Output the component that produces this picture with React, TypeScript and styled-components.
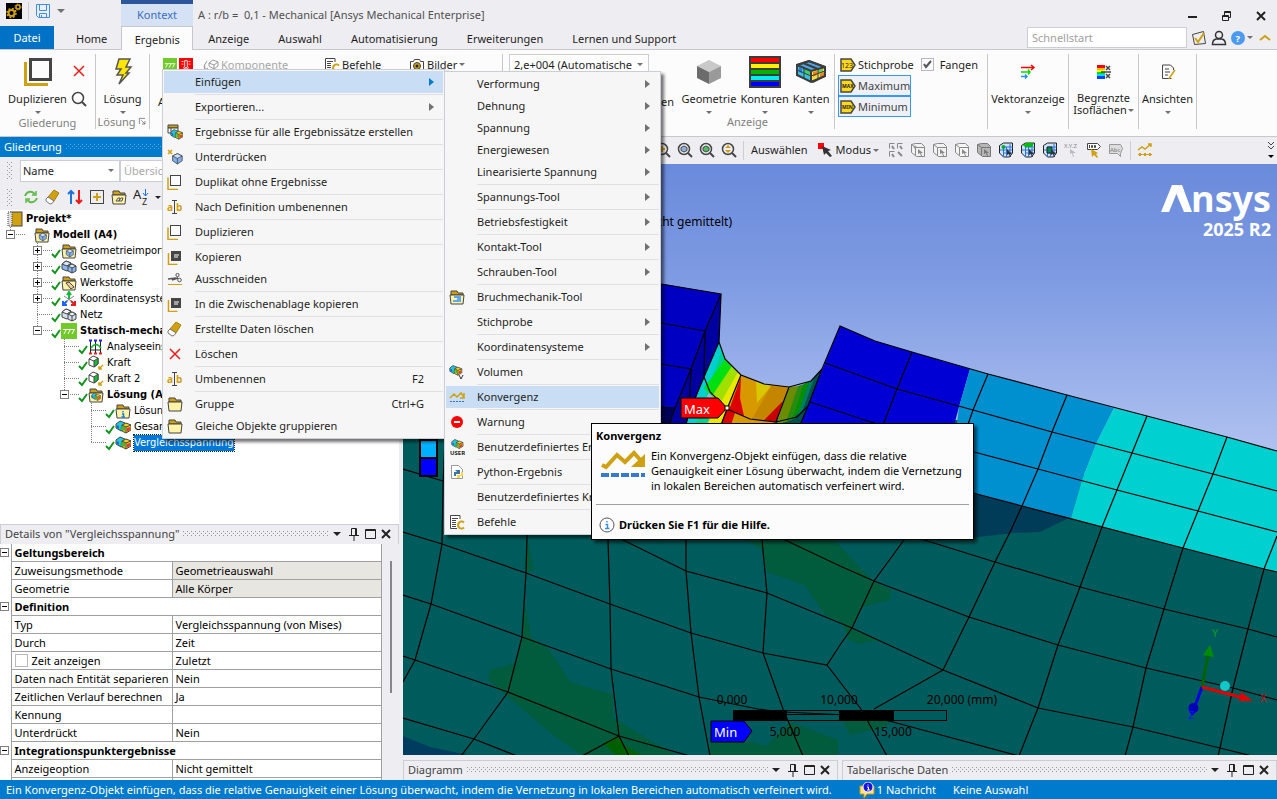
import React from "react";
import styled, { createGlobalStyle, css } from "styled-components";

const GlobalStyle = createGlobalStyle`
  * { box-sizing: border-box; }
  html, body { margin: 0; padding: 0; height: 100%; }
  body { font-family: "Noto Sans", "Open Sans", sans-serif; font-size: 11px; line-height: 16px; color: #1e1e1e; background: #eeeef2; overflow: hidden; }
  button, input, select { font: inherit; color: inherit; }
  button { border: 0; background: none; padding: 0; cursor: default; white-space: nowrap; }
  svg { display: block; flex: none; }
`;

/* ---------- icons ---------- */

const D = "#454545";
const G = "#cfa012";

const cubes = (
  <g strokeWidth="1">
    <path d="M1 5 5 2l5 2v6l-4 2-5-3z" fill="#25c7d8" stroke={D} />
    <path d="M7 6l4-2 5 2v5l-5 3-4-2z" fill="#f0d31a" stroke={D} />
    <path d="M8 7l2 1v4l-2-1z" fill="#2fbf3a" />
    <path d="M12 9l3-1v3l-3 1.500z" fill="#e33" />
    <path d="M2 6l2 1v3l-2-1z" fill="#1e63e0" />
    <path d="M5 8l2 0v3l-2 0z" fill="#18c060" />
    <path d="M7 6l4 2 5-2M11 8v6" fill="none" stroke={D} />
  </g>
);
const folder = (
  <g>
    <path d="M2 4V2h6l1 2h5v2H2z" fill={G} stroke={D} />
    <path d="M1 6h14l-1 9H2z" fill="#fff3a8" stroke={D} />
  </g>
);
const blueCube = (
  <g stroke={D} strokeLinejoin="round">
    <path d="M8 2l6 3v6l-6 4-6-4V5z" fill="#7fb0f0" />
    <path d="M2 5l6-3 6 3-6 3z" fill="#cfe0f8" />
    <path d="M8 8v7" fill="none" />
  </g>
);
const twinCubes = (fill: string, light: string) => (
  <g stroke={D} strokeLinejoin="round">
    <path d="M1 5l4-3 5 2v6l-4 2-5-2z" fill={fill} />
    <path d="M1 5l5 2 4-3-5-2z" fill={light} />
    <path d="M7 7l4-2 4 2v5l-4 2-4-2z" fill={fill} />
    <path d="M7 7l4 2 4-2-4-2z" fill={light} />
    <path d="M11 9v5" />
  </g>
);
const magnifier = (
  <g fill="none" stroke={D}>
    <circle cx="7" cy="7" r="5.5" strokeWidth="1.5" />
    <path d="M11 11l4 4" strokeWidth="2" />
  </g>
);
const selCube = (fill: string, dark: string) => (
  <g stroke={dark} fill={fill}>
    <path d="M1.5 2.5 5.500 1.500h6l3 3v10h-8l-5-4z" />
    <path d="M5.5 5.5h9M5.500 5.500v8M1.500 2.500l4 3" fill="none" />
    <path d="M8 7l5 4h-2l1 3h-1l-1-3-2 1z" fill={dark} stroke="none" />
  </g>
);
const meshCube = (green: React.ReactNode) => (
  <g>
    <path d="M1.5 3.5 5.5 1h9v10l-3 4h-6l-4-4z" fill="#cfe3ff" stroke="#222" />
    <path d="M5.5 5v10M8.5 5v10M2 8h12M5 11h9M5.5 5h9M12 2v12" stroke="#2b72d8" fill="none" />
    {green}
    <path d="M9 7l5 5h-2l1 3h-1l-1-3-2 1z" fill="#333" />
  </g>
);
const tag = <path d="M1 2h10l4 6-4 6H1z" fill="#ffd81a" stroke={D} strokeWidth="1.5" />;

const icons: Record<string, React.ReactNode> = {
  none: null,
  app: (
    <g>
      <rect width="16" height="16" fill="#000" />
      <circle cx="5.5" cy="10" r="3" fill="none" stroke={G} strokeWidth="2" />
      <circle cx="5.5" cy="10" r="4.5" fill="none" stroke={G} strokeWidth="1.5" strokeDasharray="2 1.5" />
      <circle cx="12" cy="4" r="2" fill="none" stroke={G} strokeWidth="1.5" />
      <circle cx="12" cy="4" r="3" fill="none" stroke={G} strokeDasharray="1.5 1" />
    </g>
  ),
  save: (
    <g fill="none" stroke="#3b8fe8">
      <path d="M1.5 1.5h13v13H3.5l-2-2z" />
      <path d="M4.5 1.5v6h7v-6M4.5 14.5v-4h7v4M6.5 12v2" />
    </g>
  ),
  duplicate: (
    <g fill="none">
      <path d="M1 3.5v12h10" stroke={G} strokeWidth="1.5" />
      <rect x="3.5" y="1.5" width="10" height="10" stroke={D} fill="#fbfbfb" />
    </g>
  ),
  copy: (
    <g>
      <path d="M1.5 4v11.5h9" stroke={G} strokeWidth="1.5" fill="none" />
      <rect x="4" y="2" width="10" height="10" fill={D} />
      <path d="M7 6h5M7 8h4" stroke="#fff" />
    </g>
  ),
  cut: (
    <g fill="none" stroke="#555">
      <path d="M1 8l8-1M5 9l6-2" strokeWidth="1.5" />
      <circle cx="12.5" cy="9" r="1.8" />
      <circle cx="10.5" cy="4" r="1.6" />
      <path d="M11 5.5 9 8" />
      <path d="M1 13.5h14" stroke={G} />
    </g>
  ),
  redX: <path d="M3 3l10 10M13 3 3 13" stroke="#f01818" strokeWidth="1.5" fill="none" />,
  search: magnifier,
  rename: (
    <g>
      <text x="0" y="12" fontSize="10" fontWeight="700" fill={G}>a</text>
      <text x="9" y="12" fontSize="10" fontWeight="700" fill={G}>b</text>
      <path d="M5 1.5h5M5 14.5h5M7.5 1.5v13" stroke={D} fill="none" />
    </g>
  ),
  eraser: (
    <g>
      <path d="M3 8 9 1l5 3-5 8z" fill={G} stroke="#a8820a" />
      <path d="M3 8l6 4-2 2.5-2 .5-4-3v-2z" fill="#fff" stroke="#777" />
    </g>
  ),
  folder,
  folderCube: <g>{folder}<g transform="translate(4 5) scale(.6)">{blueCube}</g></g>,
  folderPen: <g>{folder}<path d="M5 8l3-1 5 5-3 2z" fill="#f0d0a0" stroke={D} /></g>,
  folderInfo: <g>{folder}<path d="M8 8v1.5M7 11h1.5v3M6.5 14h3.5" stroke="#1e7fd8" strokeWidth="1.5" fill="none" /></g>,
  folderResult: <g>{folder}<g transform="translate(3 5) scale(.6)">{cubes}</g></g>,
  folderLink: <g>{folder}<path d="M5 12l2-3h2l-1 3H5zM8 12l2-3h2l-1 3z" fill="none" stroke="#555" /></g>,
  folderBlue: <g>{folder}<path d="M5 7h7v6H4v-2h4v-2H5z" fill="#62a8ee" /></g>,
  results: cubes,
  resultsAll: (
    <g>
      <path d="M1 1h10v3H1z" fill={G} stroke={D} />
      <path d="M1 4h10v5H1zM4 4v5" fill="#fff" stroke={D} />
      <g transform="translate(3 4) scale(.8)">{cubes}</g>
    </g>
  ),
  resultsUser: (
    <g>
      <g transform="translate(2 -1) scale(.75)">{cubes}</g>
      <text x="1" y="16" fontSize="6" fontWeight="700" fill="#222">USER</text>
    </g>
  ),
  resultsV: (
    <g>
      <g transform="scale(.8)">{cubes}</g>
      <path d="M10 11l2 4 2-4" fill="none" stroke="#333" />
    </g>
  ),
  suppress: (
    <g>
      <path d="M1 1l4 4M5 1 1 5" stroke={G} strokeWidth="1.5" />
      <g transform="translate(4 3) scale(.8)">{blueCube}</g>
    </g>
  ),
  geometry: twinCubes("#8ab8f2", "#d7e6fb"),
  mesh: twinCubes("#d3e0ef", "#f2f7fc"),
  axes: (
    <g fill="none" strokeWidth="1.5">
      <path d="M8 8V2M6 4l2-3 2 3" stroke="#12b83a" strokeWidth="2" />
      <path d="M3 5l10 7M13 5 3 12" stroke="#888" strokeWidth="1" />
      <path d="M6 10l-4 4M2 10v4h4" stroke="#1f62ff" strokeWidth="2" />
      <path d="M10 10l4 4M14 10v4h-4" stroke="#e02020" strokeWidth="2" />
    </g>
  ),
  staticEnv: (
    <g>
      <rect width="16" height="16" fill="#72c92a" />
      <path d="M2 6.5h12M5 7l-2 4M9 7l-2 4M13 7l-2 4" stroke="#fff" fill="none" />
    </g>
  ),
  thermal: (
    <g>
      <rect width="16" height="16" fill="#f00" />
      <path d="M6.5 3h3v6l1 2-1 2h-3l-1-2 1-2zM3 4h2M3 7h2M11 4h2M11 7h2M3 13h10" stroke="#fff" fill="none" />
      <circle cx="8" cy="11" r="1" fill="#fff" />
    </g>
  ),
  analysis: (
    <g fill="none">
      <path d="M2.5 2v13M7.5 2v13M12.5 2v13M2 11h11" stroke="#222" />
      <path d="M3 9q5-7 10 0" stroke="#12b32a" strokeWidth="1.5" />
      <path d="M1 1.5h3M6 1.5h3M11 1.5h3" stroke="#22f" strokeWidth="2" />
      <path d="M1 14.5h3M6 14.5h3M11 14.5h3" stroke="#e22" strokeWidth="2" />
    </g>
  ),
  force: (
    <g>
      <path d="M1 4l4-3 5 2v6l-4 3-5-2z" fill="#fff" stroke={D} />
      <path d="M6 6l4-3v6l-4 3z" fill="#12c435" stroke={D} />
      <path d="M1 4l5 2" stroke={D} />
      <path d="M15 10l-4 4M11 11v3h3" stroke={G} strokeWidth="1.5" fill="none" />
    </g>
  ),
  project: (
    <g>
      <rect x="4" y="1" width="11" height="14" fill={G} stroke={D} />
      <rect x="1" y="1" width="4" height="14" fill="#ddd" stroke={D} strokeDasharray="1 1" />
    </g>
  ),
  refresh: (
    <g fill="none" stroke="#5dbb46" strokeWidth="2">
      <path d="M2 7q2-5 7-4l3 2M14 9q-2 5-7 4l-3-2" />
      <path d="M13 2v4H9M3 14v-4h4" strokeWidth="1.5" />
    </g>
  ),
  arrows: (
    <g fill="none" strokeWidth="2">
      <path d="M4 15V2M1 5l3-3 3 3" stroke="#1f72d8" />
      <path d="M12 1v13M9 11l3 3 3-3" stroke="#f01818" />
    </g>
  ),
  plusBox: (
    <g fill="none">
      <rect x="1.5" y="1.5" width="13" height="13" stroke={D} />
      <path d="M8 4v8M4 8h8" stroke={G} strokeWidth="2" />
    </g>
  ),
  sortAz: (
    <g>
      <text x="0" y="10" fontSize="13" fill="#222">A</text>
      <text x="9" y="16" fontSize="9" fill="#222">Z</text>
      <path d="M12.5 0v7M10 4l2.500 3 2.500-3" stroke="#1f72d8" fill="none" />
    </g>
  ),
  commands: (
    <g>
      <path d="M11 5V1.5H1.5v13H8" fill="#fff" stroke={D} />
      <path d="M3 4.5h6M3 6.5h4M3 8.5h4M3 10.5h4M3 12.5h4" stroke={D} />
      <path d="M15 8.5a3.5 3.5 0 1 0 0 5" fill="none" stroke={G} strokeWidth="2" />
    </g>
  ),
  camera: (
    <g>
      <path d="M1.5 4.5h3l1-2h5l1 2h3v9h-13z" fill="#fff" stroke={D} />
      <circle cx="8" cy="9" r="3.5" fill={G} stroke={D} />
      <circle cx="8" cy="9" r="1.5" fill="#222" />
    </g>
  ),
  component: (
    <g fill="none" stroke="#999">
      <path d="M6 6l4-3 5 2v4l-4 3-5-3zM6 6l5 2 4-3M11 8v4" />
      <path d="M4 4q-4 4-2 8M1 9l1 4 3-2" />
      <path d="M4 14h11" strokeWidth="2" />
    </g>
  ),
  convergence: (
    <g fill="none">
      <path d="M1 9l4-4 3 3 4-4 3 4M15 4v5h-4" stroke={G} strokeWidth="1.5" />
      <path d="M1 12.5h14" stroke="#2f72cf" strokeDasharray="2 1" />
    </g>
  ),
  warning: (
    <g>
      <circle cx="8" cy="8" r="6" fill="#f00" />
      <path d="M5 8h6" stroke="#fff" strokeWidth="2" />
    </g>
  ),
  python: (
    <g>
      <path d="M2.5 1.5h7l4 4v9h-11z" fill="#fff" stroke="#999" />
      <path d="M6 6h5v4H7v2H5V8h3z" fill="#3b77a8" />
      <path d="M12 8h2v4h-3v2H8v-3h4z" fill="#ffd343" />
    </g>
  ),
  max: <g>{tag}<text x="2" y="10" fontSize="5" fontWeight="700" fill="#222">MAX</text></g>,
  min: <g>{tag}<text x="2" y="10" fontSize="5" fontWeight="700" fill="#222">MIN</text></g>,
  probe: <g>{tag}<text x="1" y="11" fontSize="7" fill="#222">123</text></g>,
  vectors: (
    <g fill="none" strokeWidth="1.5">
      <path d="M1 3.5h13M11 1l3 2.5-3 2.5" stroke="#f00" />
      <path d="M1 8h9M8 5.5 10 8l-2 2.5" stroke="#0d0" />
      <path d="M1 12.5h6M5 10.5l2 2-2 2" stroke="#2f8ff0" />
    </g>
  ),
  iso: (
    <g>
      <path d="M1 1h8v3H1z" fill="#f00" />
      <path d="M1 4h8v2H1z" fill="#fb0" />
      <path d="M1 6h8v2H1z" fill="#ef0" />
      <path d="M1 8h8v2H1z" fill="#0d2" />
      <path d="M1 10h8v2H1z" fill="#0df" />
      <path d="M1 12h8v3H1z" fill="#04f" />
      <path d="M5 8h10M10 2l4 4M14 2l-4 4M10 10l4 4M14 10l-4 4" stroke={D} strokeWidth="1.5" />
    </g>
  ),
  views: (
    <g fill="none">
      <path d="M13.5 6V4l-3-3h-8v13.5h9" stroke={D} />
      <path d="M5 5h4M5 8h5M5 11h3" stroke={D} />
      <path d="M15 6l-5 7-1 2" stroke={G} strokeWidth="1.5" />
    </g>
  ),
  zoomPlus: <g>{magnifier}<path d="M7 4v6M4 7h6" stroke={G} strokeWidth="2" /></g>,
  zoomCube: <g>{magnifier}<path d="M7 4l3 1.5v3L7 10 4 8.5v-3z" fill="#8fb2dc" stroke={D} /></g>,
  zoomGreen: <g>{magnifier}<path d="M7 4l3 1.5v3L7 10 4 8.5v-3z" fill="#4cc060" stroke={D} /></g>,
  zoomFit: <g>{magnifier}<path d="M7 3l3 3H4zM7 11l3-3H4z" fill={G} /></g>,
  selMode: (
    <g>
      <rect x="0" y="1" width="6" height="6" fill="#f00" />
      <path d="M4 4l9 4-3 1 4 5-2 1-4-4-2 2z" fill="#333" />
    </g>
  ),
  grid4: (
    <g fill="none" stroke="#888">
      <path d="M1.5 6.5v-5h5M9.5 6.5v-5h5M1.5 14.5v-5h5" />
      <path d="M4 4l2 3M12 4l2 3M4 12l2 3M10 10l4 4" strokeWidth="2" />
    </g>
  ),
  cubeVertex: <g>{selCube("#f2f2f2", "#888")}<circle cx="5" cy="5" r="1.5" fill="#999" /></g>,
  cubeEdge: selCube("#f2f2f2", "#888"),
  cubeFace: selCube("#f5f5f5", "#888"),
  cubeBody: selCube("#b5b5b5", "#777"),
  meshNode: meshCube(<circle cx="5.5" cy="5" r="2" fill="#0a2" />),
  meshFace: meshCube(<path d="M3 3l3-2h8l-2 4H5z" fill="#0b0" />),
  meshBody: meshCube(<path d="M5 5h5v6H5z" fill="#085" stroke="#222" />),
  xyz: (
    <g>
      <text x="0" y="6" fontSize="6" fill="#888">X.Y.Z</text>
      <path d="M6 7l6 4H9l1 4H9l-1-4-2 1z" fill="#bbb" />
    </g>
  ),
  tagPick: (
    <g>
      <path d="M1.5 1.5h10l3 3-3 3h-10z" fill="#fff" stroke={D} />
      <path d="M3.5 3v3M5.500 3.500h1v2h-1zM8.500 3.500h1v2h-1z" stroke={D} fill="none" />
      <path d="M5 7l7 4-2 1 2 3-1 1-3-3-2 2z" fill={G} />
    </g>
  ),
  label: (
    <g>
      <path d="M1.5 2.5h11l2 4-2 5v3l-3-3h-8z" fill="#ddd" stroke="#999" />
      <text x="2" y="10" fontSize="6" fill="#777">Abc</text>
    </g>
  ),
  chart: (
    <g fill="none" stroke={G}>
      <path d="M1 8l4-3 3 2 6-5M11 2h3v3" strokeWidth="1.5" />
      <path d="M1 12.5h14" />
      <path d="M2 12.5h2M7 12.5h2M12 12.5h2" strokeWidth="3" />
    </g>
  ),
  clipboard: (
    <g fill="none">
      <path d="M1.5 4.5l11-3 2 12-11 1z" stroke={D} />
      <path d="M4 8l3 4 6-9" stroke={G} strokeWidth="2" />
    </g>
  ),
  user: (
    <g fill="none" stroke="#333" strokeWidth="1.5">
      <circle cx="8" cy="5" r="3.5" />
      <path d="M1.5 14.5q0-5 4-5.5h5q4 .5 4 5.5z" />
    </g>
  ),
  help: (
    <g>
      <circle cx="8" cy="8" r="8" fill="#4a9bf0" />
      <text x="5" y="12" fontSize="11" fontWeight="700" fill="#fff">?</text>
    </g>
  ),
  message: (
    <g>
      <path d="M1 4h14v8H8l-3 4v-4H1z" fill="#ffe38a" stroke="#c90" />
      <circle cx="9" cy="5" r="5" fill="#1414e0" stroke="#eef" />
      <path d="M8 5h1.5v3M8 8h3M9 2.5v1" stroke="#fff" fill="none" />
    </g>
  ),
  info: (
    <g>
      <circle cx="8" cy="8" r="7" fill="#fff" stroke="#555" />
      <path d="M8 4v1.5M6.5 7.5h2v4M6 11.5h4.5" stroke="#3b8fe8" strokeWidth="1.5" fill="none" />
    </g>
  ),
  launcher: <path d="M4.5 12V4.5H12M7 7l5 5M12 8v4H8" fill="none" stroke="#666" />,
  pin: <path d="M5.5 9V2.5h5V9M9.5 2.5V9M3 9.5h10M8 10v5" fill="none" stroke="#222" />,
  box: <path d="M3.5 3.5h10v9h-10zM3 4.5h11" fill="none" stroke="#222" />,
  close: <path d="M4 4l8 8M12 4l-8 8" fill="none" stroke="#222" strokeWidth="2" />,
  minimize: <path d="M3 9h9" stroke="#222" strokeWidth="2" />,
  restore: (
    <path d="M3.5 7.5h6v5h-6zM3.5 8.5h6M5.5 7V3.5h6v6H10M5.5 4.5h6" fill="none" stroke="#222" />
  ),
  chevronUp: <path d="M3 10l5-4 5 4" fill="none" stroke={G} strokeWidth="2" />,
};

const Icon = ({ name, size = 16 }: { name: string; size?: number }) => (
  <svg width={size} height={size} viewBox="0 0 16 16" aria-hidden="true">
    {icons[name]}
  </svg>
);

const Caret = styled.span<{ $color?: string; $big?: boolean }>`
  display: inline-block;
  flex: none;
  width: 0;
  height: 0;
  border: ${(p) => (p.$big ? 4 : 3)}px solid transparent;
  border-top-color: ${(p) => p.$color || "#707070"};
  border-bottom: 0;
`;

/* ---------- shell ---------- */

const Shell = styled.div`
  position: relative;
  display: flex;
  flex-direction: column;
  width: 100%;
  height: 100vh;
  overflow: hidden;
`;

const TitleBar = styled.header`
  display: flex;
  height: 26px;
  flex: none;
`;

const QuickAccess = styled.div`
  display: flex;
  align-items: center;
  width: 121px;
  padding: 0 0 4px 6px;
  gap: 6px;
`;

const QuickDivider = styled.span`
  width: 1px;
  height: 18px;
  background: #ccced6;
`;

const ContextTab = styled.div`
  width: 72px;
  border-top: 4px solid #2b579a;
  background: #d5e1f4;
  color: #3b6dbd;
  text-align: center;
  line-height: 22px;
`;

const WindowTitle = styled.h1`
  flex: 1;
  margin: 0;
  padding-left: 5px;
  font-size: 11px;
  font-weight: 400;
  line-height: 30px;
  color: #505050;
`;

const WindowButtons = styled.div`
  display: flex;
  gap: 18px;
  padding: 5px 8px 0 0;
`;

const TabRow = styled.nav`
  display: flex;
  flex: none;
  height: 24px;
  border-bottom: 1px solid #c8c8cc;
`;

const FileTab = styled.button`
  width: 54px;
  height: 23px;
  background: #0072c6;
  color: #fff;
`;

const Tab = styled.button<{ $active?: boolean }>`
  padding: 2px 14px 0 15px;
  height: 24px;
  ${(p) =>
    p.$active &&
    css`
      width: 72px;
      padding: 2px 0 0;
      border: 1px solid #c8c8cc;
      border-bottom: 0;
      background: #fcfcfc;
    `}
`;

const Tabs = styled.div`
  display: flex;
  flex: 1;
  padding-left: 7px;
`;

const TabTools = styled.div`
  display: flex;
  align-items: center;
  gap: 4px;
  padding-right: 4px;
`;

const QuickSearch = styled.input`
  width: 160px;
  height: 21px;
  padding: 0 4px;
  border: 1px solid #ccced6;
  background: #fff;
  &::placeholder { color: #a0a0a0; opacity: 1; }
`;

/* ---------- ribbon ---------- */

const Ribbon = styled.section`
  display: flex;
  flex: none;
  height: 87px;
  padding-top: 4px;
  background: #fcfcfc;
  border-bottom: 1px solid #c8c8cc;
`;

const Group = styled.div<{ $w: number; $line?: boolean }>`
  display: flex;
  flex-direction: column;
  flex: none;
  width: ${(p) => p.$w}px;
  height: 75px;
  border-right: 1px solid ${(p) => (p.$line ? "#c8c8cc" : "transparent")};
`;

const GroupBody = styled.div`
  display: flex;
  justify-content: center;
  height: 62px;
  gap: 4px;
`;

const GroupName = styled.div<{ $trail?: number }>`
  display: flex;
  justify-content: center;
  padding-right: ${(p) => p.$trail || 0}px;
  line-height: 14px;
  color: #808080;
`;

const BigButton = styled.button`
  display: flex;
  flex-direction: column;
  align-items: center;
  flex: none;
`;

const BigIcon = styled.span`
  display: flex;
  align-items: center;
  justify-content: center;
  height: 36px;
`;

const BigLabel = styled.span`
  line-height: 18px;
  margin-bottom: 3px;
`;

const StackedLabel = styled.span`
  display: flex;
  flex-direction: column;
  align-items: center;
  padding-top: 2px;
  line-height: 12px;
`;

const StackedRow = styled.span`
  display: flex;
  align-items: center;
  gap: 1px;
`;

const SideTools = styled.div`
  display: flex;
  flex-direction: column;
  gap: 12px;
  padding: 9px 0;
`;

const SmallRow = styled.div<{ $indent?: number }>`
  display: flex;
  align-items: center;
  height: 21px;
  gap: 2px;
  padding-left: ${(p) => p.$indent || 0}px;
`;

const LowerRow = styled(SmallRow)<{ $end?: boolean }>`
  margin-top: 16px;
  padding-right: 2px;
  justify-content: ${(p) => (p.$end ? "flex-end" : "flex-start")};
`;

const SmallButton = styled.button<{ $off?: boolean }>`
  display: flex;
  align-items: center;
  gap: 2px;
  color: ${(p) => (p.$off ? "#a8a8a8" : "inherit")};
`;

const Toggle = styled.button`
  display: flex;
  align-items: center;
  gap: 2px;
  width: 73px;
  height: 21px;
  padding-left: 1px;
  border: 1px solid #3399ff;
  background: #eef0f6;
  color: #444;
`;

const ProbeTools = styled.div`
  display: flex;
  flex-direction: column;
  padding-left: 3px;
`;

const CheckLabel = styled.label<{ $cell?: boolean }>`
  display: flex;
  align-items: center;
  gap: ${(p) => (p.$cell ? 4 : 6)}px;
  margin-left: ${(p) => (p.$cell ? 0 : 5)}px;
`;

const TickBox = styled.input`
  appearance: none;
  width: 13px;
  height: 13px;
  margin: 0;
  border: 1px solid #b8b8c0;
  background: #fff;
  &:checked {
    background: url("data:image/svg+xml,%3Csvg xmlns='http://www.w3.org/2000/svg' viewBox='0 0 11 11'%3E%3Cpath d='M2 5l2 3 5-6' fill='none' stroke='%23555' stroke-width='2'/%3E%3C/svg%3E") center / 11px no-repeat;
  }
`;

const ScaleSelect = styled.select`
  appearance: none;
  width: 140px;
  height: 21px;
  margin-left: 6px;
  padding: 0 4px;
  border: 1px solid #ccced6;
  border-radius: 0;
  background: #fff;
`;

const SelectWrap = styled.span`
  display: flex;
  align-items: center;
  & > ${Caret} { margin-left: -12px; }
`;

/* ---------- docked panels ---------- */

const Workspace = styled.div`
  display: flex;
  flex: 1;
  min-height: 0;
`;

const LeftColumn = styled.aside`
  display: flex;
  flex-direction: column;
  width: 399px;
  flex: none;
  margin-right: 4px;
`;

const RightColumn = styled.main`
  display: flex;
  flex-direction: column;
  flex: 1;
  min-width: 0;
`;

const CaptionBar = styled.div<{ $active?: boolean }>`
  display: flex;
  align-items: center;
  flex: none;
  height: 20px;
  gap: 4px;
  padding: 0 4px 2px;
  border: 1px solid ${(p) => (p.$active ? "#007acc" : "#ccced6")};
  border-width: 1px 1px 0 ${(p) => (p.$active ? 0 : 1)}px;
  background: ${(p) => (p.$active ? "#007acc" : "#eeeef2")};
  color: ${(p) => (p.$active ? "#fff" : "#444")};
`;

const Grip = styled.span<{ $color?: string }>`
  flex: 1;
  height: 5px;
  background-image: radial-gradient(circle at 0 0, ${(p) => p.$color || "#999"} 1px, transparent 1px),
    radial-gradient(circle at 0 0, ${(p) => p.$color || "#999"} 1px, transparent 1px);
  background-size: 4px 4px;
  background-position: 0 0, 2px 2px;
`;

const SideGrip = styled(Grip)`
  flex: none;
  width: 5px;
  height: 17px;
  margin-right: 8px;
`;

const CaptionTools = styled.span`
  display: flex;
  align-items: center;
  & > button:first-child { margin-right: 5px; padding: 4px 0; display: flex; }
`;

const Caption = ({ title, active }: { title: string; active?: boolean }) => (
  <CaptionBar $active={active}>
    <span>{title}</span>
    <Grip $color={active ? "#59a8de" : undefined} />
    <CaptionTools>
      <button aria-label="Optionen"><Caret $color="#222" $big /></button>
      <button aria-label="Anheften"><Icon name="pin" /></button>
      <button aria-label="Maximieren"><Icon name="box" /></button>
      <button aria-label="Schließen"><Icon name="close" /></button>
    </CaptionTools>
  </CaptionBar>
);

const FilterBar = styled.div`
  display: flex;
  align-items: center;
  flex: none;
  height: 27px;
  padding-left: 7px;
`;

const FilterSelect = styled.select`
  appearance: none;
  width: 100px;
  height: 22px;
  padding: 0 2px;
  border: 1px solid #ccced6;
  border-radius: 0;
  background: #fff;
`;

const FilterInput = styled.input`
  flex: 1;
  height: 22px;
  margin-left: 6px;
  padding: 0 3px;
  border: 1px solid #ccced6;
  background: #fff;
  &::placeholder { color: #a8a8a8; opacity: 1; }
`;

const TreeTools = styled(FilterBar)`
  height: 26px;
  gap: 6px;
  & > ${SideGrip} { margin-right: 5px; }
`;

const Tree = styled.ul`
  flex: 1;
  margin: 0;
  padding: 1px 0 0;
  list-style: none;
  background: #fff;
  overflow: hidden;
  font-family: "DejaVu Sans Condensed", "DejaVu Sans", sans-serif;
`;

const TreeItem = styled.li<{ $level: number; $bold?: boolean }>`
  display: flex;
  align-items: center;
  height: 16px;
  padding-left: ${(p) => (p.$level ? p.$level * 27 - 17 : 7)}px;
  font-weight: ${(p) => (p.$bold ? 700 : 400)};
  color: #000;
  white-space: nowrap;
`;

const TreeLabel = styled.span<{ $selected?: boolean }>`
  line-height: 16px;
  margin-left: 3px;
  ${(p) =>
    p.$selected &&
    css`
      background: #0078d7;
      color: #fff;
      outline: 1px dotted #222;
    `}
`;

type Node = { level: number; icon: string; text: string; box?: "+" | "-"; check?: boolean; bold?: boolean; last?: boolean; sel?: boolean };

const nodes: Node[] = [
  { level: 0, icon: "project", text: "Projekt*", bold: true },
  { level: 1, icon: "folderCube", text: "Modell (A4)", bold: true, box: "-", last: true },
  { level: 2, icon: "folderCube", text: "Geometrieimporte", box: "+", check: true },
  { level: 2, icon: "geometry", text: "Geometrie", box: "+", check: true },
  { level: 2, icon: "folderPen", text: "Werkstoffe", box: "+", check: true },
  { level: 2, icon: "axes", text: "Koordinatensysteme", box: "+", check: true },
  { level: 2, icon: "mesh", text: "Netz", check: true },
  { level: 2, icon: "staticEnv", text: "Statisch-mechanisch (A5)", box: "-", check: true, bold: true, last: true },
  { level: 3, icon: "analysis", text: "Analyseeinstellungen", check: true },
  { level: 3, icon: "force", text: "Kraft", check: true },
  { level: 3, icon: "force", text: "Kraft 2", check: true },
  { level: 3, icon: "folderResult", text: "Lösung (A6)", box: "-", check: true, bold: true, last: true },
  { level: 4, icon: "folderInfo", text: "Lösungsinformationen", check: true },
  { level: 4, icon: "results", text: "Gesamtverformung", check: true },
  { level: 4, icon: "results", text: "Vergleichsspannung", check: true, last: true, sel: true },
];

const Elbow = ({ box, check, last }: Node) => (
  <svg width="24" height="16" overflow="visible" fill="none" stroke="#808080">
    <path d={`M.5 0V${last ? 8 : 16}M0 7.5h16`} strokeDasharray="1 1" />
    {box && (
      <g>
        <rect x="-3.5" y="3.5" width="8" height="8" fill="#fff" />
        <path d={box === "+" ? "M-2 7.5h5M.5 5v5" : "M-2 7.5h5"} stroke="#000" />
      </g>
    )}
    {check && <path d="M15 11l3 3 5-7" stroke="#10941c" strokeWidth="2" />}
  </svg>
);

/* ---------- details ---------- */

const Details = styled.div`
  display: flex;
  flex: none;
  height: 236px;
  overflow: hidden;
  background: #eeeef2;
`;

const DetailsTable = styled.table`
  width: 382px;
  margin-top: -1px;
  border-collapse: collapse;
  table-layout: fixed;
  background: #fff;
  color: #000;
  align-self: flex-start;
  & td, & th {
    height: 18px;
    padding: 0 3px;
    border: 1px solid #a0a0a0;
    line-height: 17px;
    text-align: left;
    font-weight: 400;
    white-space: nowrap;
  }
  & th[scope="colgroup"] { font-weight: 700; }
`;

const GutterCol = styled.col`
  width: 11px;
`;

const NameCol = styled.col`
  width: 161px;
`;

const GutterCell = styled.td`
  && { padding: 0; border-width: 0 1px 0 0; vertical-align: middle; }
`;

const CollapseButton = styled.button`
  display: block;
  width: 9px;
  height: 9px;
  border: 1px solid #808080;
  background: linear-gradient(#000, #000) center / 5px 1px no-repeat #fff;
`;

const ValueCell = styled.td<{ $readonly?: boolean }>`
  background: ${(p) => (p.$readonly ? "#e8e6e1" : "#fff")};
`;

const ScrollTrack = styled.div`
  flex: 1;
  padding: 17px 7px 0 8px;
`;

const ScrollThumb = styled.div`
  width: 2px;
  height: 132px;
  background: #868690;
`;

const details: [string, string?, boolean?][] = [
  ["Geltungsbereich"],
  ["Zuweisungsmethode", "Geometrieauswahl", true],
  ["Geometrie", "Alle Körper", true],
  ["Definition"],
  ["Typ", "Vergleichsspannung (von Mises)"],
  ["Durch", "Zeit"],
  ["Zeit anzeigen", "Zuletzt"],
  ["Daten nach Entität separieren", "Nein"],
  ["Zeitlichen Verlauf berechnen", "Ja"],
  ["Kennung", ""],
  ["Unterdrückt", "Nein"],
  ["Integrationspunktergebnisse"],
  ["Anzeigeoption", "Nicht gemittelt"],
  ["", ""],
];

/* ---------- graphics area ---------- */

const GraphicsBar = styled.div`
  display: flex;
  align-items: center;
  flex: none;
  height: 27px;
  gap: 6px;
  padding: 0 0 1px 10px;
`;

const BarDivider = styled.span`
  width: 1px;
  height: 19px;
  background: #ccced6;
`;

const BarText = styled.button`
  display: flex;
  align-items: center;
  gap: 2px;
  padding: 0 3px 0 1px;
`;

const Overflow = styled.div`
  display: flex;
  flex-direction: column;
  align-items: center;
  gap: 5px;
  margin-left: auto;
  padding-right: 3px;
`;

const Scene = styled.svg`
  flex: 1;
  width: 100%;
  min-height: 0;
  font-family: "Noto Sans", sans-serif;
`;

const BottomPanels = styled.div`
  display: flex;
  flex: none;
  gap: 4px;
  padding-top: 5px;
  & > * { flex: 1; }
`;

const StatusBar = styled.footer`
  display: flex;
  align-items: center;
  flex: none;
  height: 19px;
  padding-left: 6px;
  gap: 17px;
  background: #007acc;
  color: #fff;
  white-space: nowrap;
`;

const StatusItem = styled.span`
  display: flex;
  align-items: center;
  gap: 2px;
  margin-left: 10px;
`;

/* ---------- menus ---------- */

const Menu = styled.div<{ $x: number; $y: number; $w: number }>`
  position: absolute;
  left: ${(p) => p.$x}px;
  top: ${(p) => p.$y}px;
  width: ${(p) => p.$w}px;
  padding: 1px;
  border: 1px solid #ccced6;
  background: #f6f6f6;
  box-shadow: 3px 3px 3px rgba(0, 0, 0, 0.55);
`;

const MenuItem = styled.button<{ $hot?: boolean }>`
  display: flex;
  align-items: center;
  width: 100%;
  height: 22px;
  padding: 0 9px 0 3px;
  background: ${(p) => (p.$hot ? "#c9def5" : "transparent")};
`;

const MenuText = styled.span`
  flex: 1;
  margin-left: 12px;
  text-align: left;
  overflow: hidden;
`;

const MenuKey = styled.span`
  margin-right: 10px;
`;

const MenuArrow = styled.span<{ $hot?: boolean }>`
  border: 4px solid transparent;
  border-left: 5px solid ${(p) => (p.$hot ? "#007acc" : "#717171")};
  border-right: 0;
`;

const MenuLine = styled.div`
  height: 1px;
  margin: 1px 0 1px 31px;
  background: #dee0e4;
`;

type Entry = { text: string; icon?: string; arrow?: boolean; hot?: boolean; keys?: string; line?: boolean };

const contextMenu: Entry[] = [
  { text: "Einfügen", arrow: true, hot: true, line: true },
  { text: "Exportieren...", arrow: true, line: true },
  { text: "Ergebnisse für alle Ergebnissätze erstellen", icon: "resultsAll", line: true },
  { text: "Unterdrücken", icon: "suppress", line: true },
  { text: "Duplikat ohne Ergebnisse", icon: "duplicate", line: true },
  { text: "Nach Definition umbenennen", icon: "rename", line: true },
  { text: "Duplizieren", icon: "duplicate", line: true },
  { text: "Kopieren", icon: "copy" },
  { text: "Ausschneiden", icon: "cut", line: true },
  { text: "In die Zwischenablage kopieren", icon: "copy", line: true },
  { text: "Erstellte Daten löschen", icon: "eraser", line: true },
  { text: "Löschen", icon: "redX", line: true },
  { text: "Umbenennen", icon: "rename", keys: "F2", line: true },
  { text: "Gruppe", icon: "folder", keys: "Ctrl+G" },
  { text: "Gleiche Objekte gruppieren", icon: "folder" },
];

const insertMenu: Entry[] = [
  { text: "Verformung", arrow: true },
  { text: "Dehnung", arrow: true },
  { text: "Spannung", arrow: true },
  { text: "Energiewesen", arrow: true },
  { text: "Linearisierte Spannung", arrow: true, line: true },
  { text: "Spannungs-Tool", arrow: true, line: true },
  { text: "Betriebsfestigkeit", arrow: true, line: true },
  { text: "Kontakt-Tool", arrow: true, line: true },
  { text: "Schrauben-Tool", arrow: true, line: true },
  { text: "Bruchmechanik-Tool", icon: "folderBlue", line: true },
  { text: "Stichprobe", arrow: true, line: true },
  { text: "Koordinatensysteme", arrow: true, line: true },
  { text: "Volumen", icon: "resultsV", line: true },
  { text: "Konvergenz", icon: "convergence", hot: true, line: true },
  { text: "Warnung", icon: "warning", line: true },
  { text: "Benutzerdefiniertes Ergebnis", icon: "resultsUser", line: true },
  { text: "Python-Ergebnis", icon: "python", line: true },
  { text: "Benutzerdefiniertes Kriterium", line: true },
  { text: "Befehle", icon: "commands" },
];

const MenuList = ({ entries, x, y, w }: { entries: Entry[]; x: number; y: number; w: number }) => (
  <Menu $x={x} $y={y} $w={w} role="menu">
    {entries.map((e, i) => (
      <React.Fragment key={i}>
        <MenuItem role="menuitem" $hot={e.hot}>
          <Icon name={e.icon || "none"} />
          <MenuText>{e.text}</MenuText>
          {e.keys && <MenuKey>{e.keys}</MenuKey>}
          {e.arrow && <MenuArrow $hot={e.hot} />}
        </MenuItem>
        {e.line && <MenuLine />}
      </React.Fragment>
    ))}
  </Menu>
);

const Tooltip = styled.div`
  position: absolute;
  left: 591px;
  top: 423px;
  width: 383px;
  height: 117px;
  padding: 4px;
  border: 1px solid #000;
  background: #fcfcfc;
  color: #000;
  box-shadow: 3px 3px 3px rgba(0, 0, 0, 0.55);
`;

const TipTitle = styled.strong`
  display: block;
  line-height: 16px;
`;

const TipBody = styled.div`
  display: flex;
  gap: 5px;
  padding: 4px 0 11px 4px;
  line-height: 15px;
  border-bottom: 1px solid #a0a0a0;
  white-space: nowrap;
`;

const TipHelp = styled.div`
  display: flex;
  align-items: center;
  gap: 4px;
  padding: 12px 0 0 3px;
  font-weight: 700;
`;

/* ---------- scene ---------- */

const meshLines = [
  "403,469 443,481",
  "403,532 442,544 526,573 610,604 691,633 763,653 827,665 840,645",
  "827,665 840,682 861,709 887,756",
  "403,595 431,604 522,637 611,669 699,697 758,709 783,712 868,716 893,722 1019,756",
  "403,656 415,660 508,692 619,736 690,756",
  "403,718 474,739 517,756",
  "610,534 623,540 686,571 767,593 840,623 852,628 943,670 1038,708 1133,727 1220,748 1252,756",
  "770,533 785,540 840,566 874,581 969,617 1058,645 1146,668 1233,688 1277,700",
  "900,530 921,539 995,562 1080,587 1164,609 1248,629 1277,637",
  "445,440 443,485 442,544 431,604 415,660 403,682",
  "528,500 527,536 526,573 522,637 508,692 474,739 461,756",
  "607,500 608,540 610,604 611,669 619,736 629,756",
  "619,736 582,756",
  "686,500 686,571 691,633 699,697 710,756",
  "760,500 762,540 767,593 763,653 783,709 803,756",
  "912,528 904,540 874,581 852,628 840,645",
  "943,670 874,709",
  "1022,506 1011,530 995,562 969,617 943,670",
  "1102,527 1080,587 1058,645 1038,708 1019,756",
  "1183,548 1164,609 1146,668 1133,727 1125,756",
  "1264,569 1248,629 1233,688 1220,748 1218,756",
];

const blockLines = [
  "640,280 661,284 721,294 719,342 725,359 741,375 764,384 789,387 811,381 822,369 840,326 875,341 912,352 988,374 1067,395 1147,416 1227,437 1277,451",
  "661,323 705,331",
  "661,364 691,369",
  "661,407 675,408",
  "721,294 705,331 691,369 675,408 670,423",
  "705,331 704,377",
  "691,369 689,410",
  "719,342 704,377 688,415 686,425",
  "704,377 710,392 727,409 750,419 776,422 797,417 808,406",
  "741,375 727,409 721,425",
  "789,387 776,422",
  "822,369 808,406 800,425",
  "825,363 897,389 973,410 1052,432 1132,453 1213,474 1277,491",
  "810,402 874,423 974,452 1038,469 1117,490 1198,511 1277,532",
  "912,352 897,389 883,425",
  "988,374 973,410 966,430",
  "1067,395 1052,432 1038,469 1022,506",
  "1147,416 1132,453 1117,490 1102,527",
  "1227,437 1213,474 1198,511 1183,548",
  "1277,536 1264,569",
  "960,489 973,493 1022,506 1102,527 1183,548 1264,569 1277,572",
];

const fills: [string, string][] = [
  ["#005c5c", "403,420 960,420 1277,560 1277,756 403,756"],
  ["#003c58", "960,480 1071,510 1071,517 1040,532 1014,533 978,537 960,541"],
  ["#005c3c", "527,536 534,570 526,573 524,600 532,639 547,647 570,682 613,695 613,718 677,756 583,756 553,735 508,697 488,680 490,670 515,663 522,637"],
  ["#006000", "619,736 603,743 617,756 643,756 625,746"],
  ["#005c3c", "747,540 762,550 767,572 805,585 825,615 852,628 843,622 848,640 860,644 877,640 852,628 862,607 890,600 891,590 874,581 865,573 835,541 830,532 750,532"],
  ["#005c3c", "710,742 752,742 766,746 790,722 838,740 838,756 710,756"],
  ["#005c3c", "843,721 850,735 885,727 892,721"],
  ["#003c60", "403,736 430,747 473,756 403,756"],
  ["#0000c2", "640,280 721,294 670,423 640,423"],
  ["#000058", "640,404 675,408 670,423 640,423"],
  ["#0000a0", "721,294 719,342 704,377 686,425 670,425 675,408 691,369 705,331"],
  ["#00d0d0", "719,342 722,352 697,425 686,425 704,377"],
  ["#00d090", "722,350 726,360 705,400 710,425 695,425"],
  ["#00e010", "725,359 732,367 713,397 704,388 715,373"],
  ["#a0e000", "732,366 738,372 721,405 712,396"],
  ["#e8e800", "738,372 741,375 727,409 721,425 706,425 720,404"],
  ["#d89800", "741,375 764,384 789,387 776,422 766,425 721,425 727,409"],
  ["#dc0000", "741,377 740,398 744,416 729,410"],
  ["#dc0000", "727,409 735,413 731,425 721,425"],
  ["#d8c800", "756,381 771,386 757,403"],
  ["#c48600", "771,386 789,387 783,402 764,419 752,419"],
  ["#c80000", "783,401 776,422 764,420"],
  ["#005050", "804,384 811,381 822,369 808,406 800,425 776,425 776,422"],
  ["#6c8c00", "789,387 798,386 788,421 776,425"],
  ["#288a10", "798,386 804,384 794,419 786,422"],
  ["#009000", "804,384 809,382 799,412 792,420"],
  ["#00805a", "809,382 814,379 803,409 797,417"],
  ["#0000d4", "840,326 875,341 912,352 970,369 959,407 950,440 800,425 825,363"],
  ["#0090d0", "970,369 1067,395 1114,408 1097,442 1082,480 1071,518 1022,506 940,484 957,423 959,407"],
  ["#00d0d0", "1114,408 1147,416 1227,437 1277,451 1277,572 1183,548 1071,518 1082,480 1097,442"],
];

const GraphicsScene = () => (
  <Scene viewBox="403 164 874 591" preserveAspectRatio="xMaxYMin slice">
    <defs>
      <linearGradient id="sky" gradientUnits="userSpaceOnUse" x1="0" y1="164" x2="0" y2="480">
        <stop offset="0" stopColor="#6a8adb" />
        <stop offset=".35" stopColor="#7d9ae2" />
        <stop offset="1" stopColor="#b8c8f2" />
      </linearGradient>
    </defs>
    <rect x="0" y="164" width="1277" height="592" fill="url(#sky)" />
    {fills.map(([c, p], i) => <polygon key={i} fill={c} points={p} />)}
    <g fill="none" stroke="#000" strokeWidth="1.2">
      {meshLines.concat(blockLines).map((p, i) => <polyline key={i} points={p} />)}
    </g>

    <g stroke="#000" strokeWidth="2">
      <rect x="420" y="422" width="17" height="18" fill="#00e0ff" />
      <rect x="420" y="440" width="17" height="18" fill="#00b0ff" />
      <rect x="420" y="458" width="17" height="18" fill="#0000ff" />
    </g>

    <text x="732" y="226" fontSize="12" textAnchor="end">(Nicht gemittelt)</text>

    <polygon points="681,398 718,398 727,408 718,418 681,418" fill="#f00" stroke="#000" />
    <text x="684" y="414" fontSize="13" fill="#fff">Max</text>
    <rect x="725" y="406" width="4" height="4" fill="#fff" stroke="#000" />
    <polygon points="711,721 744,721 752,731 744,742 711,742" fill="#00f" stroke="#000" />
    <text x="714" y="737" fontSize="13" fill="#fff">Min</text>

    <g stroke="#000">
      <rect x="733.5" y="710.5" width="213" height="10" fill="none" />
      <rect x="733.5" y="710.5" width="53" height="10" />
      <rect x="839.5" y="710.5" width="54" height="10" />
      <path d="M787 714.5h52" />
    </g>
    <g fontSize="12" textAnchor="middle">
      <text x="732" y="704">0,000</text>
      <text x="839" y="704">10,000</text>
      <text x="962" y="704">20,000 (mm)</text>
      <text x="785" y="736">5,000</text>
      <text x="893" y="736">15,000</text>
    </g>

    <g strokeWidth="3">
      <path d="M1202 687 1208 655" stroke="#006400" />
      <polygon points="1210,645 1214,657 1203,655" fill="#008c00" />
      <path d="M1202 687 1195 706" stroke="#0000e0" />
      <circle cx="1193.5" cy="708" r="5" fill="#0000b8" />
      <polygon points="1189,711 1197,711 1192,716" fill="#0000d0" />
      <path d="M1202 687 1240 697" stroke="#e00000" />
      <polygon points="1241,692 1253,701 1239,701" fill="#e00000" />
      <circle cx="1225" cy="686" r="5" fill="#10c8c8" />
    </g>
    <g fontSize="11">
      <text x="1212" y="637" fill="#0a9a20">Y</text>
      <text x="1260" y="702" fill="#d01010">X</text>
      <text x="1188" y="719" fill="#1010ff">Z</text>
    </g>

    <g fill="#fff" fontFamily="Open Sans" fontWeight="700">
      <polygon points="1161,212 1172,185 1180,185 1169,212" />
      <polygon points="1176,193 1180,185 1182,185 1192,212 1184,212" />
      <text x="1191" y="212" fontSize="36">nsys</text>
      <text x="1271" y="236" fontSize="18" textAnchor="end">2025 R2</text>
    </g>
  </Scene>
);

/* ---------- large ribbon drawings ---------- */

const BigDuplicate = () => (
  <svg width="30" height="30" viewBox="0 0 30 30" fill="none">
    <path d="M2.5 5v22.5H25" stroke={G} strokeWidth="3" />
    <rect x="7.5" y="2.5" width="20" height="20" stroke={D} strokeWidth="3" fill="#fcfcfc" />
  </svg>
);

const Bolt = () => (
  <svg width="24" height="30" viewBox="0 0 24 30">
    <path d="M8 2h11l-4 8h5l-5 6h3L8 27l4-9H6l4-6H5z" fill="#ffe600" stroke="#555" strokeWidth="1.5" />
  </svg>
);

const GreyCube = () => (
  <svg width="28" height="28" viewBox="0 0 28 28">
    <path d="M14 2l12 6-12 6L2 8z" fill="#c9c9c9" />
    <path d="M2 8l12 6v12L2 20z" fill="#6c6c6c" />
    <path d="M26 8l-12 6v12l12-6z" fill="#9a9a9a" />
  </svg>
);

const Contours = () => (
  <svg width="32" height="32" viewBox="0 0 32 32">
    <rect width="32" height="32" fill="#3c3c3c" />
    {["#ff0000", "#fff000", "#00b400", "#00f0f0", "#0000ff"].map((c, i) => (
      <rect key={c} x="2" y={2 + i * 6} width="28" height="4" fill={c} />
    ))}
  </svg>
);

const EdgeCube = () => (
  <svg width="30" height="28" viewBox="0 0 30 28" stroke="#3c3c3c" strokeWidth="2">
    <path d="M1 7l12-4 16 6v9l-12 6L1 17z" fill="#4aa8e8" />
    <path d="M15 13l14-4v9l-14 6z" fill="#f0e040" stroke="none" />
    <path d="M1 7l14 6v11L1 17z" fill="#38c0e0" stroke="none" />
    <path d="M8 11l6 3v4l-6-3z" fill="#40d060" stroke="none" />
    <path d="M3 9l3 2v4l-3-1z" fill="#2878e8" stroke="none" />
    <path d="M17 14l4-1v4l-4 2zM24 16l4-2v4l-4 2z" fill="#f08020" stroke="none" />
    <path d="M22 12l5-1v3l-5 2z" fill="#60d060" stroke="none" />
    <path d="M1 7l12-4 16 6v9l-14 6L1 17zM1 7l14 6 14-4M15 13v11M7 5l15 6" fill="none" />
    <path d="M8 10v10M1 12l14 6M22 11v10M15 18l14-5" fill="none" strokeWidth="1" />
  </svg>
);

const Convergence = () => (
  <svg width="46" height="32" viewBox="0 0 46 32" fill="none">
    <path d="M2 17l4 2 11-12 8 7 9-9 9 10" stroke={G} strokeWidth="4" />
    <path d="M45 6v13H31z" fill={G} />
    <path d="M1 27h44" stroke="#3878cf" strokeWidth="4" strokeDasharray="8 2" />
  </svg>
);

/* ---------- page ---------- */

const BigTool = ({ label, children }: { label: string; children: React.ReactNode }) => (
  <BigButton>
    <BigIcon>{children}</BigIcon>
    <BigLabel>{label}</BigLabel>
    <Caret />
  </BigButton>
);

const selectionIcons = ["grid4", "cubeVertex", "cubeEdge", "cubeFace", "cubeBody", "meshNode", "meshFace", "meshBody", "xyz", "tagPick", "label"];
const viewIcons = ["zoomPlus", "zoomCube", "zoomGreen", "zoomFit", "zoomPlus", "zoomCube", "zoomGreen", "zoomFit", "zoomPlus", "zoomCube", "zoomPlus", "zoomPlus", "zoomCube", "zoomGreen", "zoomFit"];

export default function App() {
  return (
    <Shell>
      <GlobalStyle />
      <TitleBar>
        <QuickAccess>
          <Icon name="app" />
          <QuickDivider />
          <button aria-label="Speichern"><Icon name="save" /></button>
          <Caret $big />
        </QuickAccess>
        <ContextTab>Kontext</ContextTab>
        <WindowTitle>A : r/b = &nbsp;0,1 - Mechanical [Ansys Mechanical Enterprise]</WindowTitle>
        <WindowButtons>
          <button aria-label="Minimieren"><Icon name="minimize" /></button>
          <button aria-label="Wiederherstellen"><Icon name="restore" /></button>
          <button aria-label="Schließen"><Icon name="close" /></button>
        </WindowButtons>
      </TitleBar>

      <TabRow>
        <FileTab>Datei</FileTab>
        <Tabs>
          <Tab>Home</Tab>
          <Tab $active>Ergebnis</Tab>
          <Tab>Anzeige</Tab>
          <Tab>Auswahl</Tab>
          <Tab>Automatisierung</Tab>
          <Tab>Erweiterungen</Tab>
          <Tab>Lernen und Support</Tab>
        </Tabs>
        <TabTools>
          <QuickSearch placeholder="Schnellstart" aria-label="Schnellstart" />
          <button aria-label="Aufgaben"><Icon name="clipboard" /></button>
          <button aria-label="Benutzer"><Icon name="user" /></button>
          <SmallButton aria-label="Hilfe"><Icon name="help" size={14} /><Caret /></SmallButton>
          <button aria-label="Menüband einklappen"><Icon name="chevronUp" /></button>
        </TabTools>
      </TabRow>

      <Ribbon>
        <Group $w={96} $line>
          <GroupBody>
            <BigTool label="Duplizieren"><BigDuplicate /></BigTool>
            <SideTools>
              <button aria-label="Löschen"><Icon name="redX" /></button>
              <button aria-label="Suchen"><Icon name="search" /></button>
            </SideTools>
          </GroupBody>
          <GroupName>Gliederung</GroupName>
        </Group>
        <Group $w={54} $line>
          <GroupBody><BigTool label="Lösung"><Bolt /></BigTool></GroupBody>
          <GroupName>Lösung<Icon name="launcher" size={12} /></GroupName>
        </Group>
        <Group $w={53}>
          <SmallRow $indent={13}>
            <Icon name="staticEnv" size={14} />
            <Icon name="thermal" size={14} />
          </SmallRow>
          <LowerRow $indent={8}>Analyse</LowerRow>
        </Group>
        <Group $w={120}>
          <SmallRow><SmallButton $off disabled><Icon name="component" />Komponente</SmallButton></SmallRow>
        </Group>
        <Group $w={86}>
          <SmallRow $indent={1}><SmallButton><Icon name="commands" />Befehle</SmallButton></SmallRow>
        </Group>
        <Group $w={94} $line>
          <SmallRow><SmallButton><Icon name="camera" />Bilder<Caret /></SmallButton></SmallRow>
        </Group>
        <Group $w={174}>
          <SelectWrap>
            <ScaleSelect aria-label="Skalierung"><option>2,e+004 (Automatische</option></ScaleSelect>
            <Caret />
          </SelectWrap>
          <LowerRow $end>Alle Farben</LowerRow>
        </Group>
        <Group $w={158} $line>
          <GroupBody>
            <BigTool label="Geometrie"><GreyCube /></BigTool>
            <BigTool label="Konturen"><Contours /></BigTool>
            <BigTool label="Kanten"><EdgeCube /></BigTool>
          </GroupBody>
          <GroupName $trail={16}>Anzeige</GroupName>
        </Group>
        <Group $w={153} $line>
          <ProbeTools>
            <SmallRow $indent={2}>
              <SmallButton><Icon name="probe" />Stichprobe</SmallButton>
              <CheckLabel><TickBox type="checkbox" defaultChecked />Fangen</CheckLabel>
            </SmallRow>
            <Toggle aria-pressed="true"><Icon name="max" />Maximum</Toggle>
            <Toggle aria-pressed="true"><Icon name="min" />Minimum</Toggle>
          </ProbeTools>
        </Group>
        <Group $w={81} $line>
          <GroupBody><BigTool label="Vektoranzeige"><Icon name="vectors" /></BigTool></GroupBody>
        </Group>
        <Group $w={70} $line>
          <GroupBody>
            <BigButton>
              <BigIcon><Icon name="iso" /></BigIcon>
              <StackedLabel>
                <span>Begrenzte</span>
                <StackedRow>Isoflächen<Caret /></StackedRow>
              </StackedLabel>
            </BigButton>
          </GroupBody>
        </Group>
        <Group $w={58} $line>
          <GroupBody><BigTool label="Ansichten"><Icon name="views" /></BigTool></GroupBody>
        </Group>
      </Ribbon>

      <Workspace>
        <LeftColumn>
          <Caption title="Gliederung" active />
          <FilterBar>
            <SideGrip />
            <SelectWrap>
              <FilterSelect aria-label="Filter"><option>Name</option></FilterSelect>
              <Caret />
            </SelectWrap>
            <FilterInput placeholder="Übersicht durchsuchen" aria-label="Übersicht durchsuchen" />
          </FilterBar>
          <TreeTools>
            <SideGrip />
            <button aria-label="Aktualisieren"><Icon name="refresh" /></button>
            <button aria-label="Leeren"><Icon name="eraser" /></button>
            <button aria-label="Sortieren"><Icon name="arrows" /></button>
            <button aria-label="Erweitern"><Icon name="plusBox" /></button>
            <button aria-label="Ordner"><Icon name="folderLink" /></button>
            <button aria-label="Alphabetisch"><Icon name="sortAz" /></button>
            <Caret $color="#222" />
          </TreeTools>
          <Tree>
            {nodes.map((n) => (
              <TreeItem key={n.text} $level={n.level} $bold={n.bold}>
                {n.level > 0 && <Elbow {...n} />}
                <Icon name={n.icon} size={16} />
                <TreeLabel $selected={n.sel}>{n.text}</TreeLabel>
              </TreeItem>
            ))}
          </Tree>
          <Caption title={'Details von "Vergleichsspannung"'} />
          <Details>
            <DetailsTable>
              <colgroup><GutterCol /><NameCol /><col /></colgroup>
              <tbody>
                {details.map(([k, v, ro], i) => (
                  <tr key={i}>
                    <GutterCell>{v === undefined && <CollapseButton aria-label="Einklappen" />}</GutterCell>
                    {v === undefined ? (
                      <th scope="colgroup" colSpan={2}>{k}</th>
                    ) : (
                      <>
                        <th scope="row">
                          {k === "Zeit anzeigen" ? (
                            <CheckLabel $cell><TickBox type="checkbox" />{k}</CheckLabel>
                          ) : k}
                        </th>
                        <ValueCell $readonly={ro}>{v}</ValueCell>
                      </>
                    )}
                  </tr>
                ))}
              </tbody>
            </DetailsTable>
            <ScrollTrack><ScrollThumb /></ScrollTrack>
          </Details>
        </LeftColumn>

        <RightColumn>
          <GraphicsBar>
            {viewIcons.map((n, i) => <button key={i} aria-label="Ansicht"><Icon name={n} /></button>)}
            <BarDivider />
            <BarText>Auswählen</BarText>
            <BarText><Icon name="selMode" />Modus<Caret /></BarText>
            {selectionIcons.map((n) => <button key={n} aria-label={n}><Icon name={n} /></button>)}
            <BarDivider />
            <button aria-label="Diagramm"><Icon name="chart" /></button>
            <Overflow>
              <svg width="7" height="8" fill="none" stroke="#444"><path d="M1 0l3 3 3-3M1 4l3 3 3-3" /></svg>
              <Caret $color="#000" />
            </Overflow>
          </GraphicsBar>
          <GraphicsScene />
          <BottomPanels>
            <Caption title="Diagramm" />
            <Caption title="Tabellarische Daten" />
          </BottomPanels>
        </RightColumn>
      </Workspace>

      <StatusBar>
        <span>Ein Konvergenz-Objekt einfügen, dass die relative Genauigkeit einer Lösung überwacht, indem die Vernetzung in lokalen Bereichen automatisch verfeinert wird.</span>
        <StatusItem><Icon name="message" />1 Nachricht</StatusItem>
        <span>Keine Auswahl</span>
      </StatusBar>

      <MenuList entries={contextMenu} x={162} y={69} w={283} />
      <MenuList entries={insertMenu} x={444} y={71} w={217} />
      <Tooltip role="tooltip">
        <TipTitle>Konvergenz</TipTitle>
        <TipBody>
          <Convergence />
          <span>
            Ein Konvergenz-Objekt einfügen, dass die relative<br />
            Genauigkeit einer Lösung überwacht, indem die Vernetzung<br />
            in lokalen Bereichen automatisch verfeinert wird.
          </span>
        </TipBody>
        <TipHelp><Icon name="info" />Drücken Sie F1 für die Hilfe.</TipHelp>
      </Tooltip>
    </Shell>
  );
}
